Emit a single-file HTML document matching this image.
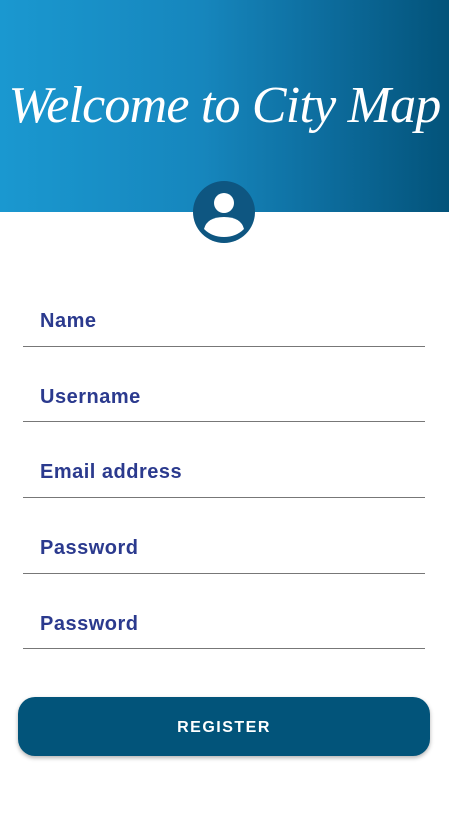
<!DOCTYPE html>
<html><head><style>
body{margin:0;width:449px;height:834px;background:#fff;font-family:"Liberation Sans",sans-serif;position:relative;overflow:hidden}
.hdr{position:absolute;left:0;top:0;width:449px;height:212px;background:linear-gradient(90deg,#1a98d0 0%,#1686bd 45%,#0c6a9a 75%,#03537a 100%)}
.title{position:absolute;left:0;top:76px;width:449px;text-align:center;color:#fff;font-family:"Liberation Serif",serif;font-style:italic;font-size:52px;letter-spacing:-0.8px}
.av{position:absolute;left:193px;top:181px}
.lbl{position:absolute;left:40px;font-weight:bold;font-size:20px;letter-spacing:0.5px;color:#2b3a8e}
.ln{position:absolute;left:23px;width:402px;height:1px;background:#777}
.btn{position:absolute;left:18px;top:697px;width:412px;height:59px;border-radius:17px;background:#02547a;color:#fff;font-size:16px;font-weight:bold;letter-spacing:1.5px;text-align:center;line-height:61px;box-shadow:0 2px 4px rgba(0,0,0,.3)}
</style></head><body>
<div class="hdr"></div>
<div class="title">Welcome to City Map</div>
<svg class="av" width="62" height="62" viewBox="0 0 62 62"><circle cx="31" cy="31" r="31" fill="#0e5681"/><circle cx="31" cy="22" r="10" fill="#fff"/><path d="M11 48 Q14 36 31 36 Q48 36 51 48 Q43 56 31 56 Q19 56 11 48Z" fill="#fff"/></svg>
<div class="lbl" style="top:310px">Name</div><div class="ln" style="top:346px"></div>
<div class="lbl" style="top:386px">Username</div><div class="ln" style="top:421px"></div>
<div class="lbl" style="top:461px">Email address</div><div class="ln" style="top:497px"></div>
<div class="lbl" style="top:537px">Password</div><div class="ln" style="top:573px"></div>
<div class="lbl" style="top:613px">Password</div><div class="ln" style="top:648px"></div>
<div class="btn">REGISTER</div>
</body></html>
